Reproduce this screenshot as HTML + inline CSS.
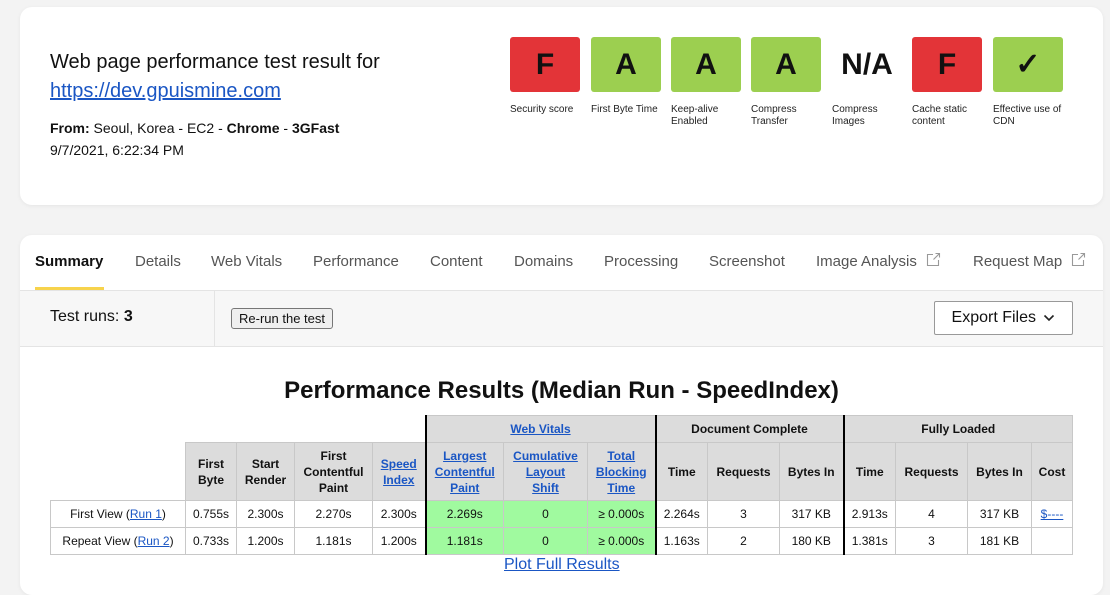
<!DOCTYPE html>
<html><head><meta charset="utf-8"><style>
body{margin:0;width:1110px;height:577px;overflow:hidden;background:#f3f3f3;font-family:"Liberation Sans",sans-serif;color:#111;position:relative}
.card{position:absolute;background:#fff;border-radius:12px;box-shadow:0 1px 4px rgba(0,0,0,.06)}
a{color:#1a56c4}
.g{position:absolute;top:37px;width:70px;height:55px;border-radius:3px;font:bold 30px "Liberation Sans",sans-serif;text-align:center;line-height:55px}
.r{background:#e33438}.gr{background:#9ccf50}
.lb{position:absolute;top:104px;font-size:10px;line-height:12px;color:#222;width:75px}
.tab{position:absolute;top:253px;font-size:15px;color:#555}
table{position:absolute;left:50px;top:415px;border-collapse:collapse;table-layout:fixed;font-size:12px}
td,th{border:1px solid #c8c8c8;text-align:center;padding:0;height:26px}
th{background:#dcdcdc;font-weight:bold;line-height:16px}
.h1 th{height:26px}
.h2 th{height:57px}
.v{background:#a0fa9f}
.bl{border-left:2px solid #000}
.e{border:none;background:none}
</style></head><body>
<div class="card" style="left:20px;top:7px;width:1083px;height:198px">
<div style="position:absolute;left:30px;top:41px;font-size:20px;line-height:29px">Web page performance test result for<br><a href="#">https://dev.gpuismine.com</a></div>
<div style="position:absolute;left:30px;top:110px;font-size:14px;line-height:22px"><b>From:</b> Seoul, Korea - EC2 - <b>Chrome</b> - <b>3GFast</b><br>9/7/2021, 6:22:34 PM</div>
</div>
<div class="g r" style="left:510px">F</div><div class="g gr" style="left:591px">A</div><div class="g gr" style="left:671px">A</div><div class="g gr" style="left:751px">A</div><div class="g" style="left:832px">N/A</div><div class="g r" style="left:912px">F</div><div class="g gr" style="left:993px">✓</div>
<div class="lb" style="left:510px">Security score</div><div class="lb" style="left:591px">First Byte Time</div><div class="lb" style="left:671px">Keep-alive Enabled</div><div class="lb" style="left:751px">Compress Transfer</div><div class="lb" style="left:832px">Compress Images</div><div class="lb" style="left:912px">Cache static content</div><div class="lb" style="left:993px">Effective use of CDN</div>
<div class="card" style="left:20px;top:235px;width:1083px;height:360px"></div>
<div style="position:absolute;left:20px;top:290px;width:1083px;height:55px;background:#f7f7f7;border-top:1px solid #e4e4e4;border-bottom:1px solid #e4e4e4"></div>
<div style="position:absolute;left:214px;top:291px;width:1px;height:55px;background:#e4e4e4"></div>
<div class="tab" style="left:35px;color:#111;font-weight:bold">Summary</div>
<div style="position:absolute;left:35px;top:287px;width:69px;height:3px;background:#f7d34c"></div>
<div class="tab" style="left:135px">Details</div><div class="tab" style="left:211px">Web Vitals</div><div class="tab" style="left:313px">Performance</div><div class="tab" style="left:430px">Content</div><div class="tab" style="left:514px">Domains</div><div class="tab" style="left:604px">Processing</div><div class="tab" style="left:709px">Screenshot</div>
<div class="tab" style="left:816px">Image Analysis</div>
<svg style="position:absolute;left:926px;top:252px" width="15" height="15" viewBox="0 0 15 15" fill="none" stroke="#999" stroke-width="1.1"><path d="M7 2.5H1.5v11h11V8"/><path d="M9.5 1.5h4v4M13.5 1.5L7.5 7.5"/></svg>
<div class="tab" style="left:973px">Request Map</div>
<svg style="position:absolute;left:1071px;top:252px" width="15" height="15" viewBox="0 0 15 15" fill="none" stroke="#999" stroke-width="1.1"><path d="M7 2.5H1.5v11h11V8"/><path d="M9.5 1.5h4v4M13.5 1.5L7.5 7.5"/></svg>
<div style="position:absolute;left:50px;top:308px;font-size:16px">Test runs: <b>3</b></div>
<div style="position:absolute;left:231px;top:308px;border:1px solid #777;border-radius:3px;background:#efefef;font-size:13px;padding:2px 7px">Re-run the test</div>
<div style="position:absolute;left:934px;top:301px;width:137px;height:32px;border:1px solid #999;border-radius:2px;background:#fff;font-size:16px;line-height:32px;text-align:center">Export Files <svg width="12" height="8" viewBox="0 0 12 8" style="margin-left:3px"><path d="M1.5 1.5L6 6l4.5-4.5" fill="none" stroke="#222" stroke-width="1.6"/></svg></div>
<div style="position:absolute;left:0;width:1123px;top:377px;text-align:center;font-size:24px;font-weight:bold">Performance Results (Median Run - SpeedIndex)</div>
<table>
<colgroup><col style="width:135px"><col style="width:51px"><col style="width:58px"><col style="width:78px"><col style="width:53px"><col style="width:78px"><col style="width:84px"><col style="width:68px"><col style="width:52px"><col style="width:72px"><col style="width:64px"><col style="width:52px"><col style="width:72px"><col style="width:64px"><col style="width:41px"></colgroup>
<tr class="h1"><td class="e" colspan="5"></td><th colspan="3" class="bl"><a href="#">Web Vitals</a></th><th colspan="3" class="bl">Document Complete</th><th colspan="4" class="bl">Fully Loaded</th></tr>
<tr class="h2"><td class="e" style="border-bottom:1px solid #c8c8c8"></td><th>First Byte</th><th>Start Render</th><th>First Contentful Paint</th><th><a href="#">Speed Index</a></th><th class="bl"><a href="#">Largest Contentful Paint</a></th><th style="padding:0 8px"><a href="#">Cumulative Layout Shift</a></th><th><a href="#">Total Blocking Time</a></th><th class="bl">Time</th><th>Requests</th><th>Bytes In</th><th class="bl">Time</th><th>Requests</th><th>Bytes In</th><th>Cost</th></tr>
<tr><td>First View (<a href="#">Run 1</a>)</td><td>0.755s</td><td>2.300s</td><td>2.270s</td><td>2.300s</td><td class="v bl">2.269s</td><td class="v">0</td><td class="v">≥ 0.000s</td><td class="bl">2.264s</td><td>3</td><td>317 KB</td><td class="bl">2.913s</td><td>4</td><td>317 KB</td><td><a href="#">$----</a></td></tr>
<tr><td>Repeat View (<a href="#">Run 2</a>)</td><td>0.733s</td><td>1.200s</td><td>1.181s</td><td>1.200s</td><td class="v bl">1.181s</td><td class="v">0</td><td class="v">≥ 0.000s</td><td class="bl">1.163s</td><td>2</td><td>180 KB</td><td class="bl">1.381s</td><td>3</td><td>181 KB</td><td></td></tr>
</table>
<div style="position:absolute;left:504px;top:556px;font-size:16px"><a href="#">Plot Full Results</a></div>
</body></html>
